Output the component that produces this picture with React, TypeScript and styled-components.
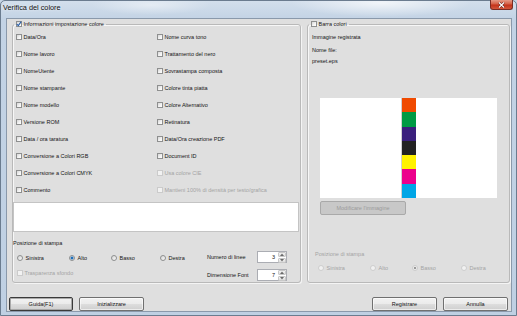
import React from 'react';
import styled, { createGlobalStyle } from 'styled-components';

const Global = createGlobalStyle`
  html, body { margin: 0; padding: 0; }
  body {
    width: 517px; height: 316px; overflow: hidden;
    background: #c6d5e6;
    font-family: "Liberation Sans", Arial, sans-serif;
  }
`;

const Window = styled.div`
  width: 517px;
  height: 316px;
  box-sizing: border-box;
  display: flex;
  flex-direction: column;
  border: 1px solid #6b7c8f;
  border-radius: 5px 5px 0 0;
  background:
    radial-gradient(ellipse 90px 14px at 380px 2px, rgba(255,255,255,0.7), rgba(255,255,255,0) 100%),
    radial-gradient(ellipse 60px 10px at 150px 4px, rgba(255,255,255,0.45), rgba(255,255,255,0) 100%),
    linear-gradient(to bottom, #d3dfec 0px, #c3d3e5 18px, #bfd0e3 100%);
`;

const TitleBar = styled.div`
  height: 17px;
  display: flex;
  justify-content: space-between;
  align-items: flex-start;
  padding-left: 2px;
`;

const Title = styled.span`
  font-size: 7.3px;
  line-height: 8px;
  margin-top: 3px;
  color: #111;
  text-shadow: 0 0 3px rgba(255,255,255,0.9);
`;

const CloseButton = styled.div`
  width: 23px;
  height: 10px;
  margin-right: 3px;
  margin-top: -1px;
  box-sizing: border-box;
  border: 1px solid #7a2c23;
  border-top: none;
  border-radius: 0 0 3px 3px;
  background: linear-gradient(to bottom, #e49a86 0%, #d45f45 45%, #c3321a 55%, #d2563a 100%);
  display: flex;
  align-items: center;
  justify-content: center;
`;

const Client = styled.div`
  flex: 1;
  margin: 0 4px 3px 5px;
  border: 1px solid #8a99ab;
  background: #dfdfdf;
  display: flex;
  flex-direction: column;
`;

const Panels = styled.div`
  display: flex;
  gap: 6px;
  padding: 1px 0 0 5px;
`;

const Group = styled.fieldset<{ $width: number }>`
  width: ${p => p.$width}px;
  height: 263px;
  box-sizing: border-box;
  margin: 0;
  padding: 0;
  min-width: 0;
  border: 1px solid #b9b9b9;
  border-radius: 3px;
  box-shadow: inset 1px 1px 0 #f7f7f7, 1px 1px 0 #f4f4f4;
  display: flex;
  flex-direction: column;
`;

const Legend = styled.legend`
  margin-left: 1px;
  padding: 0 2px 0 2px;
  height: 8px;
  line-height: 8px;
  font-size: 5.5px;
  display: flex;
  align-items: center;
  gap: 1.5px;
  color: #141414;
`;

const Text = styled.span<{ $disabled?: boolean }>`
  font-size: 5.5px;
  line-height: 8px;
  white-space: nowrap;
  color: ${p => (p.$disabled ? '#a4a4a4' : '#141414')};
`;

const CheckGrid = styled.div`
  display: grid;
  grid-template-columns: 141px 1fr;
  grid-auto-rows: 17.1px;
  padding-left: 3px;
`;

const CheckRow = styled.label`
  display: flex;
  align-items: center;
  gap: 1.5px;
`;

const Box = styled.span<{ $disabled?: boolean }>`
  width: 6px;
  height: 6px;
  flex: none;
  box-sizing: border-box;
  border: 1px solid ${p => (p.$disabled ? '#cbcbcb' : '#8e8f8f')};
  background: ${p => (p.$disabled ? '#f2f2f2' : 'linear-gradient(135deg, #d6d6d6 0%, #f4f4f4 60%, #ffffff 100%)')};
  display: flex;
  align-items: center;
  justify-content: center;
  overflow: visible;
`;

const Memo = styled.div`
  margin: 3px 1px 0 0;
  height: 30px;
  box-sizing: border-box;
  background: #ffffff;
  border: 1px solid #c4c4c4;
`;

const PrintArea = styled.div`
  display: grid;
  grid-template-columns: 194px 1fr;
  margin-top: 7px;
`;

const PrintLeft = styled.div`
  display: flex;
  flex-direction: column;
`;

const RadioRow = styled.div<{ $inset: number }>`
  display: grid;
  grid-template-columns: 52px 42px 49px 1fr;
  padding-left: ${p => p.$inset}px;
  height: 8px;
`;

const RadioItem = styled.label`
  display: flex;
  align-items: center;
  gap: 2.5px;
`;

const Radio = styled.span<{ $on?: boolean; $disabled?: boolean }>`
  width: 6px;
  height: 6px;
  flex: none;
  box-sizing: border-box;
  border-radius: 50%;
  border: 1px solid ${p => (p.$disabled ? '#cdcdcd' : '#8e8f8f')};
  background: ${p =>
    p.$on
      ? p.$disabled
        ? 'radial-gradient(circle, #9a9a9a 0 1.3px, #f0f0f0 1.6px)'
        : 'radial-gradient(circle, #1f6fb8 0 1.4px, #e8eef4 1.7px)'
      : p.$disabled
      ? '#f1f1f1'
      : 'linear-gradient(135deg, #d4d4d4, #fbfbfb)'};
`;

const TransRow = styled.label`
  display: flex;
  align-items: center;
  gap: 1.5px;
  padding-left: 4px;
  margin-top: 7px;
  height: 8px;
`;

const PrintRight = styled.div`
  display: flex;
  flex-direction: column;
  gap: 6px;
  padding-top: 12px;
`;

const SpinRow = styled.div`
  display: flex;
  align-items: center;
  height: 12px;
`;

const SpinLabel = styled(Text)`
  width: 50px;
`;

const Spin = styled.div`
  width: 30px;
  height: 12px;
  box-sizing: border-box;
  border: 1px solid #abadb3;
  background: #fff;
  display: flex;
`;

const SpinValue = styled.span`
  flex: 1;
  text-align: right;
  padding-right: 2px;
  font-size: 5.5px;
  line-height: 10px;
  color: #141414;
`;

const SpinArrows = styled.div`
  width: 8px;
  display: flex;
  flex-direction: column;
  gap: 1px;
  padding: 0 0 0 1px;
`;

const SpinArrow = styled.div`
  flex: 1;
  background: linear-gradient(to bottom, #f4f4f4, #dcdcdc);
  border: 1px solid #c8c8c8;
  border-radius: 1px;
  box-sizing: border-box;
  display: flex;
  align-items: center;
  justify-content: center;
`;

const InfoBlock = styled.div`
  display: flex;
  flex-direction: column;
  padding: 5px 0 0 4px;
`;

const InfoLine = styled(Text)<{ $gap: number }>`
  margin-top: ${p => p.$gap}px;
`;

const Preview = styled.div`
  margin: 33px 0 0 12px;
  width: 177px;
  height: 100px;
  background: #ffffff;
  display: flex;
  justify-content: center;
`;

const ColorBar = styled.div`
  width: 14px;
  display: flex;
  flex-direction: column;
  border-left: 1px solid #d0d0d0;
`;

const Band = styled.div<{ $c: string }>`
  flex: 1;
  background: ${p => p.$c};
`;

const Button = styled.div<{ $w: number; $default?: boolean; $disabled?: boolean }>`
  width: ${p => p.$w}px;
  height: 14px;
  box-sizing: border-box;
  border: 1px solid ${p => (p.$default ? '#3a3a3a' : p.$disabled ? '#a9a9a9' : '#707070')};
  border-radius: 2px;
  background: ${p =>
    p.$disabled
      ? '#c8c8c8'
      : 'linear-gradient(to bottom, #f2f2f2 0%, #ebebeb 48%, #dddddd 52%, #cfcfcf 100%)'};
  box-shadow: ${p =>
    p.$disabled ? 'none' : p.$default ? 'inset 0 0 0 1px #a9a9a9' : 'inset 0 0 0 1px rgba(255,255,255,0.6)'};
  display: flex;
  align-items: center;
  justify-content: center;
  font-size: 5.5px;
  color: ${p => (p.$disabled ? '#9b9b9b' : '#141414')};
  white-space: nowrap;
`;

const EditButton = styled(Button)`
  margin: 3px 0 0 12px;
`;

const RightPrintTitle = styled(Text)`
  margin: 35px 0 0 7px;
`;

const RightRadios = styled(RadioRow)`
  margin-top: 6px;
`;

const LeftRadios = styled(RadioRow)`
  margin-top: 7px;
`;

const ButtonBar = styled.div`
  display: flex;
  justify-content: space-between;
  padding: 0 3px 0 2px;
  margin-top: 14px;
`;

const ButtonGroup = styled.div`
  display: flex;
  gap: 6px;
`;

const CheckMark = () => (
  <svg width="6" height="6" viewBox="0 0 6 6" style={{ overflow: 'visible' }}>
    <path d="M0.8 3.1 L2.3 4.6 L5.2 0.6" fill="none" stroke="#2a5fa8" strokeWidth="1.1" />
  </svg>
);

const Check: React.FC<{ label: string; disabled?: boolean; checked?: boolean }> = ({ label, disabled, checked }) => (
  <CheckRow>
    <Box $disabled={disabled}>{checked && <CheckMark />}</Box>
    <Text $disabled={disabled}>{label}</Text>
  </CheckRow>
);

const RadioGroupRow: React.FC<{ selected: number; disabled?: boolean; inset: number; Comp: typeof RadioRow }> = ({
  selected,
  disabled,
  inset,
  Comp,
}) => (
  <Comp $inset={inset}>
    {['Sinistra', 'Alto', 'Basso', 'Destra'].map((l, i) => (
      <RadioItem key={l}>
        <Radio $on={i === selected} $disabled={disabled} />
        <Text $disabled={disabled}>{l}</Text>
      </RadioItem>
    ))}
  </Comp>
);

const Arrow: React.FC<{ up?: boolean }> = ({ up }) => (
  <svg width="4" height="3" viewBox="0 0 4 3">
    <path d={up ? 'M0 3 L2 0.5 L4 3 Z' : 'M0 0 L2 2.5 L4 0 Z'} fill="#6a6a6a" />
  </svg>
);

const SpinBox: React.FC<{ value: number }> = ({ value }) => (
  <Spin>
    <SpinValue>{value}</SpinValue>
    <SpinArrows>
      <SpinArrow>
        <Arrow up />
      </SpinArrow>
      <SpinArrow>
        <Arrow />
      </SpinArrow>
    </SpinArrows>
  </Spin>
);

const leftItems: [string, boolean][] = [
  ['Data/Ora', false],
  ['Nome curva tono', false],
  ['Nome lavoro', false],
  ['Trattamento del nero', false],
  ['NomeUtente', false],
  ['Sovrastampa composta', false],
  ['Nome stampante', false],
  ['Colore tinta piatta', false],
  ['Nome modello', false],
  ['Colore Alternativo', false],
  ['Versione ROM', false],
  ['Retinatura', false],
  ['Data / ora taratura', false],
  ['Data/Ora creazione PDF', false],
  ['Conversione a Colori RGB', false],
  ['Document ID', false],
  ['Conversione a Colori CMYK', false],
  ['Usa colore CIE', true],
  ['Commento', false],
  ['Mantieni 100% di densità per testo/grafica', true],
];

const bands = ['#f04a00', '#009a44', '#3a1f7d', '#222222', '#fff200', '#ec008c', '#00a6e6'];

export default function App() {
  return (
    <>
      <Global />
      <Window>
        <TitleBar>
          <Title>Verifica del colore</Title>
          <CloseButton>
            <svg width="7" height="6" viewBox="0 0 7 6">
              <path d="M1 0.5 L6 5.5 M6 0.5 L1 5.5" stroke="#5a1a10" strokeWidth="2.2" />
              <path d="M1 0.5 L6 5.5 M6 0.5 L1 5.5" stroke="#ffffff" strokeWidth="1.2" />
            </svg>
          </CloseButton>
        </TitleBar>
        <Client>
          <Panels>
            <Group $width={289}>
              <Legend>
                <Box>
                  <CheckMark />
                </Box>
                <span>Informazioni impostazione colore</span>
              </Legend>
              <CheckGrid>
                {leftItems.map(([l, d]) => (
                  <Check key={l} label={l} disabled={d} />
                ))}
              </CheckGrid>
              <Memo />
              <PrintArea>
                <PrintLeft>
                  <Text>Posizione di stampa</Text>
                  <RadioGroupRow selected={1} inset={4} Comp={LeftRadios} />
                  <TransRow>
                    <Box $disabled />
                    <Text $disabled>Trasparenza sfondo</Text>
                  </TransRow>
                </PrintLeft>
                <PrintRight>
                  <SpinRow>
                    <SpinLabel>Numero di linee</SpinLabel>
                    <SpinBox value={3} />
                  </SpinRow>
                  <SpinRow>
                    <SpinLabel>Dimensione Font</SpinLabel>
                    <SpinBox value={7} />
                  </SpinRow>
                </PrintRight>
              </PrintArea>
            </Group>
            <Group $width={203}>
              <Legend>
                <Box />
                <span>Barra colori</span>
              </Legend>
              <InfoBlock>
                <InfoLine $gap={0}>Immagine registrata</InfoLine>
                <InfoLine $gap={5}>Nome file:</InfoLine>
                <InfoLine $gap={3}>preset.eps</InfoLine>
              </InfoBlock>
              <Preview>
                <ColorBar>
                  {bands.map(c => (
                    <Band key={c} $c={c} />
                  ))}
                </ColorBar>
              </Preview>
              <EditButton $w={86} $disabled>
                Modificare l'immagine
              </EditButton>
              <RightPrintTitle $disabled>Posizione di stampa</RightPrintTitle>
              <RadioGroupRow selected={2} disabled inset={10} Comp={RightRadios} />
            </Group>
          </Panels>
          <ButtonBar>
            <ButtonGroup>
              <Button $w={64} $default>
                Guida(F1)
              </Button>
              <Button $w={65}>Inizializzare</Button>
            </ButtonGroup>
            <ButtonGroup>
              <Button $w={65}>Registrare</Button>
              <Button $w={65}>Annulla</Button>
            </ButtonGroup>
          </ButtonBar>
        </Client>
      </Window>
    </>
  );
}
